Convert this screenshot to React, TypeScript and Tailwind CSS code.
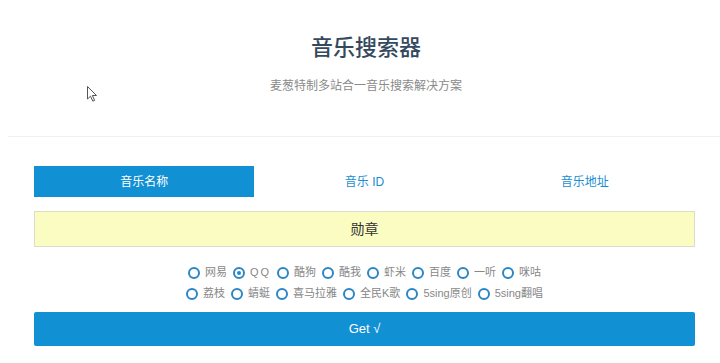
import React, { useState } from "react";

const FONT = {
  fontFamily: '"Liberation Sans", "Noto Sans CJK SC", sans-serif',
};

const TABS = ["音乐名称", "音乐 ID", "音乐地址"];

const SITES_ROW1 = ["网易", "QQ", "酷狗", "酷我", "虾米", "百度", "一听", "咪咕"];
const SITES_ROW2 = ["荔枝", "蜻蜓", "喜马拉雅", "全民K歌", "5sing原创", "5sing翻唱"];

const Radio: React.FC<{
  label: string;
  checked: boolean;
  onSelect: () => void;
}> = ({ label, checked, onSelect }) => (
  <label
    className="flex items-center gap-[5px] cursor-pointer"
    onClick={onSelect}
  >
    <span className="w-[12px] h-[12px] rounded-full border-2 border-[#2b86c5] flex items-center justify-center">
      {checked && <span className="w-[4px] h-[4px] rounded-full bg-[#2b86c5]" />}
    </span>
    <span className={label === "QQ" ? "tracking-[2px]" : ""}>{label}</span>
  </label>
);

const App: React.FC = () => {
  const [tab, setTab] = useState(0);
  const [site, setSite] = useState("QQ");

  return (
    <div className="relative w-[720px] h-[363px] bg-white overflow-hidden" style={FONT}>
      {/* cursor from the screenshot */}
      <svg
        className="absolute left-[87px] top-[86px]"
        width="12"
        height="17"
        viewBox="0 0 12 17"
      >
        <path
          d="M0.5 0.5 L0.5 13 L3.5 10.2 L5.8 15.2 L7.6 14.4 L5.4 9.5 L9.5 9.5 Z"
          fill="#fff"
          stroke="#555"
          strokeWidth="1"
          strokeLinejoin="round"
        />
      </svg>

      <h1 className="pt-[33px] pl-[12px] h-[63px] text-center text-[22px] leading-[30px] font-medium text-[#34495e]">
        音乐搜索器
      </h1>
      <p className="mt-[13px] pl-[12px] text-center text-[12px] leading-[20px] text-[#8a8a8a]">
        麦葱特制多站合一音乐搜索解决方案
      </p>
      <div className="mt-[40px] ml-[8px] border-t border-[#f0f0f0]" />

      <div className="pl-[34px] pr-[25px] mt-[29px]">
        <div className="grid grid-cols-3 h-[31px]">
          {TABS.map((t, i) => (
            <button
              key={t}
              onClick={() => setTab(i)}
              className={
                i === tab
                  ? "bg-[#1190d4] text-white text-[12px]"
                  : "bg-white text-[#1a8dd0] text-[12px]"
              }
            >
              {t}
            </button>
          ))}
        </div>

        <div className="mt-[14px] h-[36px] bg-[#fafcc2] border border-[#dcdcc8] flex items-center justify-center text-[14px] text-[#333]">
          勋章
        </div>

        <div className="mt-[15px] text-[11px] text-[#888] flex flex-col items-center">
          <div className="h-[21px] flex items-center gap-[6px]">
            {SITES_ROW1.map((s) => (
              <Radio key={s} label={s} checked={site === s} onSelect={() => setSite(s)} />
            ))}
          </div>
          <div className="h-[21px] flex items-center gap-[6px]">
            {SITES_ROW2.map((s) => (
              <Radio key={s} label={s} checked={site === s} onSelect={() => setSite(s)} />
            ))}
          </div>
        </div>

        <button className="mt-[8px] w-full h-[34px] bg-[#1190d4] rounded-[2px] text-white text-[13px]">
          Get √
        </button>
      </div>
    </div>
  );
};

export default App;
